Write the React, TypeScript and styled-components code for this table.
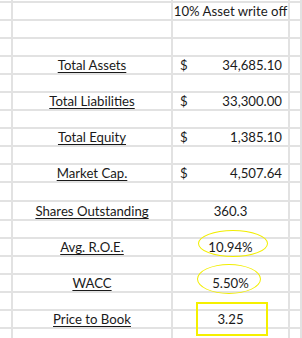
import { Fragment } from 'react'
import styled, { createGlobalStyle } from 'styled-components'

const GlobalStyle = createGlobalStyle`
  html, body {
    margin: 0;
    padding: 0;
    background: #ffffff;
  }
  body {
    font-family: Lato, "Open Sans", sans-serif;
    color: #1a1a1a;
  }
`

const Sheet = styled.div`
  display: grid;
  grid-template-columns: 13px 160px 117px 1fr;
  width: 302px;
  height: 338px;
  overflow: hidden;
`

const Cell = styled.div<{ $h: number }>`
  position: relative;
  box-sizing: border-box;
  height: ${(p) => p.$h}px;
  border-right: 2px solid #e2e2e2;
  border-bottom: 2px solid #e2e2e2;
  display: flex;
  align-items: flex-end;
  justify-content: center;
  font-size: 13.2px;
  line-height: 16px;
  white-space: nowrap;
`

const Label = styled.span`
  text-decoration: underline;
  text-underline-offset: 2px;
`

const Money = styled.div`
  display: flex;
  justify-content: space-between;
  width: 100%;
  padding: 0 6px 0 7px;
`

const Highlight = styled.div<{ $round?: boolean }>`
  position: absolute;
  box-sizing: border-box;
  border: ${(p) => (p.$round ? '1px solid #f2ee00' : '2px solid #f5f000')};
  border-radius: ${(p) => (p.$round ? '50%' : '0')};
  pointer-events: none;
`

type Row = {
  h: number
  label?: string
  money?: string
  value?: string
  mark?: { round?: boolean; left: number; top: number; w: number; h: number }
}

const rows: Row[] = [
  { h: 3 },
  { h: 18, value: '10% Asset write off' },
  { h: 18 },
  { h: 18 },
  { h: 18, label: 'Total Assets', money: '34,685.10' },
  { h: 18 },
  { h: 18, label: 'Total Liabilities', money: '33,300.00' },
  { h: 18 },
  { h: 18, label: 'Total Equity', money: '1,385.10' },
  { h: 18 },
  { h: 18, label: 'Market Cap.', money: '4,507.64' },
  { h: 19 },
  { h: 19, label: 'Shares Outstanding', value: '360.3' },
  { h: 18 },
  {
    h: 18,
    label: 'Avg. R.O.E.',
    value: '10.94%',
    mark: { round: true, left: 25, top: -9, w: 70, h: 27 },
  },
  { h: 18 },
  {
    h: 18,
    label: 'WACC',
    value: '5.50%',
    mark: { round: true, left: 24, top: -11, w: 64, h: 30 },
  },
  { h: 18 },
  {
    h: 18,
    label: 'Price to Book',
    value: '3.25',
    mark: { left: 23, top: -9, w: 72, h: 34 },
  },
  { h: 18 },
]

export default function App() {
  return (
    <>
      <GlobalStyle />
      <Sheet>
        {rows.map((r, i) => (
          <Fragment key={i}>
            <Cell $h={r.h} />
            <Cell $h={r.h}>{r.label && <Label>{r.label}</Label>}</Cell>
            <Cell $h={r.h}>
              {r.money && (
                <Money>
                  <span>$</span>
                  <span>{r.money}</span>
                </Money>
              )}
              {r.value && <span>{r.value}</span>}
              {r.mark && (
                <Highlight
                  $round={r.mark.round}
                  style={{
                    left: r.mark.left,
                    top: r.mark.top,
                    width: r.mark.w,
                    height: r.mark.h,
                  }}
                />
              )}
            </Cell>
            <Cell $h={r.h} />
          </Fragment>
        ))}
      </Sheet>
    </>
  )
}
